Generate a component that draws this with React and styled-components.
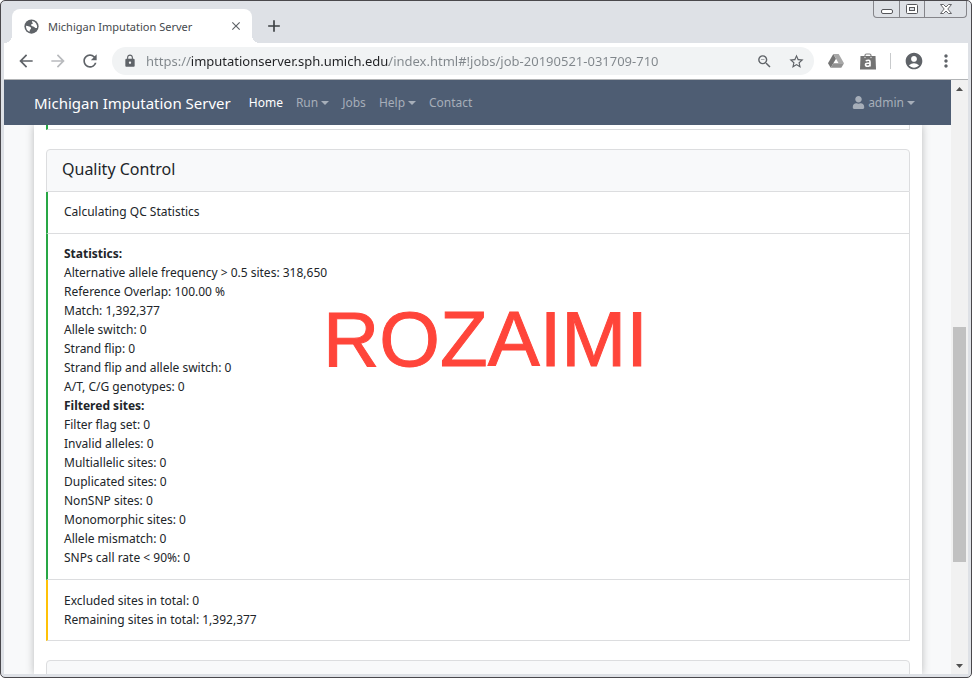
import React from 'react';
import styled, { createGlobalStyle, css } from 'styled-components';
import {
  MdArrowBack, MdArrowForward, MdRefresh, MdLock, MdStarBorder,
  MdAccountCircle, MdMoreVert, MdClose, MdAdd, MdOutlineZoomOut,
} from 'react-icons/md';
import { FaUser } from 'react-icons/fa';

const GlobalStyle = createGlobalStyle`
  *, *::before, *::after { box-sizing: border-box; }
  body { margin: 0; background: #fff; overflow: hidden; }
  body, button, input { font-family: "Noto Sans", "Open Sans", sans-serif; font-size: 12px; }
  button { border: 0; padding: 0; background: none; color: inherit; cursor: pointer; }
  a { color: inherit; text-decoration: none; }
  h2, p { margin: 0; }
  svg { display: block; flex: none; }
`;

const Window = styled.div`
  position: relative;
  display: flex;
  flex-direction: column;
  height: 100vh;
  padding: 0 3px 3px;
  border: 1px solid #4a484c;
  border-radius: 5px;
  background: #dee1e6;
  overflow: hidden;
`;

const TabStrip = styled.div`
  display: flex;
  flex: none;
  height: 42px;
  padding: 8px 0 0 8px;
`;

const Tab = styled.div`
  position: relative;
  display: flex;
  align-items: center;
  width: 240px;
  padding: 0 9px 0 12px;
  border-radius: 8px 8px 0 0;
  background: #fff;
  color: #45494d;
  svg { color: #5f6368; }
  &::before, &::after {
    content: "";
    position: absolute;
    bottom: 0;
    width: 8px;
    height: 8px;
  }
  &::before { left: -8px; background: radial-gradient(circle at 0 0, #dee1e6 8px, #fff 8px); }
  &::after { right: -8px; background: radial-gradient(circle at 100% 0, #dee1e6 8px, #fff 8px); }
`;

const TabTitle = styled.span`
  flex: 1;
  margin-left: 9px;
  font-size: 11px;
  white-space: nowrap;
`;

const NewTab = styled.button`
  display: flex;
  align-items: center;
  margin-left: 12px;
  color: #3c4043;
`;

const Caption = styled.div`
  position: absolute;
  top: 0;
  right: 4px;
  display: flex;
  height: 17px;
  border: 1px solid #85858a;
  border-top: 0;
  border-radius: 0 0 4px 4px;
`;

const CaptionButton = styled.button`
  display: flex;
  align-items: center;
  justify-content: center;
  width: ${p => (p.$wide ? 42 : 25)}px;
  & + & { border-left: 1px solid #85858a; }
`;

const Toolbar = styled.div`
  display: flex;
  flex: none;
  align-items: center;
  height: 37px;
  padding: 0 12px;
  border-bottom: 1px solid #b2b4b6;
  background: #fff;
  color: #5f6368;
`;

const IconButton = styled.button`
  display: flex;
  margin-right: ${p => p.$gap || 0}px;
  color: ${p => (p.$dim ? '#b9bbbe' : 'inherit')};
`;

const AddressBar = styled.label`
  display: flex;
  flex: 1;
  align-items: center;
  height: 28px;
  margin-right: 14px;
  padding: 0 9px 0 11px;
  border-radius: 14px;
  background: #f1f3f4;
`;

const Address = styled.input`
  flex: 1;
  min-width: 0;
  height: 28px;
  margin-left: 9px;
  padding: 0;
  border: 0;
  outline: 0;
  font-size: 13px;
  color: transparent;
  background: linear-gradient(90deg, #80868b 44px, #202124 44px, #202124 243px, #80868b 243px);
  background-clip: text;
  -webkit-background-clip: text;
`;

const ToolbarDivider = styled.span`
  width: 1px;
  height: 16px;
  margin: 0 13px 0 14px;
  background: #c8cacc;
`;

const Viewport = styled.div`
  display: flex;
  flex: 1;
  min-height: 0;
  background: #f8f9fa;
`;

const Page = styled.div`
  display: flex;
  flex: 1;
  flex-direction: column;
  min-width: 0;
  overflow: hidden;
`;

const NavBar = styled.nav`
  position: relative;
  z-index: 1;
  display: flex;
  flex: none;
  align-items: center;
  gap: 13px;
  height: 45px;
  padding: 0 36px 0 30px;
  background: #4e5d73;
  color: #a6aeb9;
`;

const Brand = styled.a`
  margin-right: 5px;
  color: #fff;
  font-size: 15px;
  line-height: 20px;
`;

const NavLink = styled.a`
  display: flex;
  align-items: center;
  line-height: 20px;
  ${p => p.$active && css`color: #fff;`}
  ${p => p.$end && css`margin-left: auto;`}
`;

const Caret = styled.span`
  margin-left: 3px;
  border: 4px solid transparent;
  border-top-color: currentColor;
  border-bottom: 0;
`;

const UserIcon = styled(FaUser)`
  margin-right: 3px;
`;

const Sheet = styled.main`
  position: relative;
  flex: 1;
  min-height: 0;
  margin: 0 29px 0 30px;
  padding: 0 12px;
  background: #fff;
  box-shadow: 0 0 8px rgba(0, 0, 0, 0.25);
`;

const Card = styled.section`
  margin-bottom: 19px;
`;

const CardTitle = styled.h2`
  min-height: 43px;
  padding: 0 15px;
  border: 1px solid #dcdddf;
  border-radius: 4px 4px 0 0;
  background: #f8f9fa;
  color: #212529;
  font-size: 16px;
  font-weight: 400;
  line-height: 39px;
`;

const tones = { success: '#28a745', warning: '#ffc107' };

const Entry = styled.div`
  padding: 10px 16px 12px;
  border: 1px solid #dcdddf;
  border-top: 0;
  border-left: 2px solid ${p => tones[p.$tone]};
  color: #212529;
  line-height: 19px;
  ${p => p.$tone === 'warning' && css`padding: 11px 16px;`}
  ${p => p.$tail && css`height: 5px; padding: 0;`}
`;

const Watermark = styled.div`
  position: absolute;
  top: 169px;
  left: 289px;
  color: #ff453a;
  font-family: "Liberation Sans", Arial, sans-serif;
  font-size: 78px;
  line-height: 90px;
  -webkit-text-stroke: 1px #ff453a;
  pointer-events: none;
`;

const ScrollBar = styled.div`
  display: flex;
  flex: none;
  flex-direction: column;
  align-items: center;
  width: 17px;
  background: #f1f1f1;
`;

const ScrollArrow = styled.button`
  display: flex;
  align-items: center;
  justify-content: center;
  width: 17px;
  height: 17px;
  color: #505050;
`;

const ScrollTrack = styled.div`
  display: flex;
  flex: 1;
  flex-direction: column;
`;

const ScrollSpace = styled.div`
  flex: ${p => p.$share};
`;

const ScrollThumb = styled.div`
  flex: 235;
  width: 13px;
  background: #c1c1c1;
`;

const statistics = [
  'Alternative allele frequency > 0.5 sites: 318,650',
  'Reference Overlap: 100.00 %',
  'Match: 1,392,377',
  'Allele switch: 0',
  'Strand flip: 0',
  'Strand flip and allele switch: 0',
  'A/T, C/G genotypes: 0',
];

const filtered = [
  'Filter flag set: 0',
  'Invalid alleles: 0',
  'Multiallelic sites: 0',
  'Duplicated sites: 0',
  'NonSNP sites: 0',
  'Monomorphic sites: 0',
  'Allele mismatch: 0',
  'SNPs call rate < 90%: 0',
];

const Lines = ({ items }) => items.map(text => <p key={text}>{text}</p>);

const Globe = () => (
  <svg width="15" height="15" viewBox="0 0 16 16" aria-hidden="true">
    <circle cx="8" cy="8" r="7.6" fill="#5f6368" />
    <path d="M8.800 2.200c-.6 1-.2 1.700.6 2 .1 1-.8 1.500-1.800 1.500-.3 1 .2 1.700 1.200 1.900 1.700.1 2.600 1.100 3.300 1.900h1.700A6 6 0 0 0 8.800 2.200zM2.100 7.100c1.100 0 2.400.5 3.400.9 1.300.4 2.200 1 2 2-.2 1.100-1.300 1.100-1.400 2.200l-.1 1.500C3.600 12.900 1.900 10.200 2.100 7.100z" fill="#fff" />
  </svg>
);

const DriveIcon = () => (
  <svg width="16" height="14" viewBox="0 0 16 14" aria-hidden="true">
    <path d="M5.300 0 0 9.200 2.700 13.800 8 4.700z" fill="#747474" />
    <path d="M5.300 0h5.400L16 9.200h-5.400z" fill="#a8a8a8" />
    <path d="M5.300 9.200H16l-2.700 4.600H2.700z" fill="#929292" />
  </svg>
);

const BagIcon = () => (
  <svg width="16" height="17" viewBox="0 0 16 17" aria-hidden="true">
    <path d="M5 5V2.500Q5 1 6.500 1h3Q11 1 11 2.500V5" fill="none" stroke="#858585" strokeWidth="1.2" />
    <path d="M0.500 3h15l.5 13.500H0z" fill="#737373" />
    <circle cx="5" cy="4.500" r=".7" fill="#ddd" />
    <circle cx="11" cy="4.500" r=".7" fill="#ddd" />
    <path d="M5.700 7.700q4.300-1.400 4.300 1.300v4.500M10 10.300H7.500q-2 0-2 1.500t2 1.500q2.500 0 2.500-2" fill="none" stroke="#fff" strokeWidth="1.6" />
  </svg>
);

const MinimizeGlyph = () => (
  <svg width="12" height="16" viewBox="0 0 12 16" aria-hidden="true">
    <rect x="0.5" y="8.500" width="11" height="4" rx="1.5" fill="#fff" stroke="#55565a" />
  </svg>
);

const MaximizeGlyph = () => (
  <svg width="12" height="16" viewBox="0 0 12 16" aria-hidden="true">
    <rect x="0.5" y="3.500" width="11" height="9" rx="1" fill="#fff" stroke="#55565a" />
    <rect x="3.5" y="6.500" width="5" height="3" fill="#dee1e6" stroke="#55565a" />
  </svg>
);

const CloseGlyph = () => (
  <svg width="12" height="16" viewBox="0 0 12 16" aria-hidden="true">
    <path d="M.5 3.500h3L6 6l2.500-2.500h3L7.800 8l3.700 4.500h-3L6 10l-2.500 2.500h-3L4.200 8z" fill="#fff" stroke="#66676b" />
  </svg>
);

const ArrowGlyph = ({ down }) => (
  <svg width="7" height="4" viewBox="0 0 7 4" aria-hidden="true">
    <path d={down ? 'M0 0h7L3.500 4z' : 'M0 4h7L3.500 0z'} fill="currentColor" />
  </svg>
);

export default function App() {
  return (
    <>
      <GlobalStyle />
      <Window>
        <TabStrip>
          <Tab>
            <Globe />
            <TabTitle>Michigan Imputation Server</TabTitle>
            <IconButton aria-label="Close tab"><MdClose size={14} /></IconButton>
          </Tab>
          <NewTab aria-label="New tab"><MdAdd size={20} /></NewTab>
          <Caption>
            <CaptionButton aria-label="Minimize"><MinimizeGlyph /></CaptionButton>
            <CaptionButton aria-label="Maximize"><MaximizeGlyph /></CaptionButton>
            <CaptionButton aria-label="Close" $wide><CloseGlyph /></CaptionButton>
          </Caption>
        </TabStrip>

        <Toolbar>
          <IconButton aria-label="Back" $gap={12}><MdArrowBack size={20} /></IconButton>
          <IconButton aria-label="Forward" $gap={12} $dim><MdArrowForward size={20} /></IconButton>
          <IconButton aria-label="Reload" $gap={12}><MdRefresh size={20} /></IconButton>
          <AddressBar>
            <MdLock size={14} />
            <Address
              aria-label="Address"
              spellCheck={false}
              defaultValue="https://imputationserver.sph.umich.edu/index.html#!jobs/job-20190521-031709-710"
            />
            <IconButton aria-label="Zoom" $gap={15}><MdOutlineZoomOut size={17} /></IconButton>
            <IconButton aria-label="Bookmark"><MdStarBorder size={17} /></IconButton>
          </AddressBar>
          <IconButton aria-label="Drive" $gap={16}><DriveIcon /></IconButton>
          <IconButton aria-label="Extension"><BagIcon /></IconButton>
          <ToolbarDivider />
          <IconButton aria-label="Profile" $gap={12}><MdAccountCircle size={20} /></IconButton>
          <IconButton aria-label="Menu"><MdMoreVert size={20} /></IconButton>
        </Toolbar>

        <Viewport>
          <Page>
            <NavBar>
              <Brand href="#">Michigan Imputation Server</Brand>
              <NavLink href="#" $active>Home</NavLink>
              <NavLink href="#">Run<Caret /></NavLink>
              <NavLink href="#">Jobs</NavLink>
              <NavLink href="#">Help<Caret /></NavLink>
              <NavLink href="#">Contact</NavLink>
              <NavLink href="#" $end><UserIcon size={13} />admin<Caret /></NavLink>
            </NavBar>
            <Sheet>
              <Card>
                <Entry $tone="success" $tail />
              </Card>
              <Card>
                <CardTitle>Quality Control</CardTitle>
                <Entry $tone="success">Calculating QC Statistics</Entry>
                <Entry $tone="success">
                  <p><b>Statistics:</b></p>
                  <Lines items={statistics} />
                  <p><b>Filtered sites:</b></p>
                  <Lines items={filtered} />
                </Entry>
                <Entry $tone="warning">
                  <p>Excluded sites in total: 0</p>
                  <p>Remaining sites in total: 1,392,377</p>
                </Entry>
              </Card>
              <Card>
                <CardTitle />
              </Card>
              <Watermark>ROZAIMI</Watermark>
            </Sheet>
          </Page>
          <ScrollBar>
            <ScrollArrow aria-label="Scroll up"><ArrowGlyph /></ScrollArrow>
            <ScrollTrack>
              <ScrollSpace $share={230} />
              <ScrollThumb />
              <ScrollSpace $share={95} />
            </ScrollTrack>
            <ScrollArrow aria-label="Scroll down"><ArrowGlyph down /></ScrollArrow>
          </ScrollBar>
        </Viewport>
      </Window>
    </>
  );
}
